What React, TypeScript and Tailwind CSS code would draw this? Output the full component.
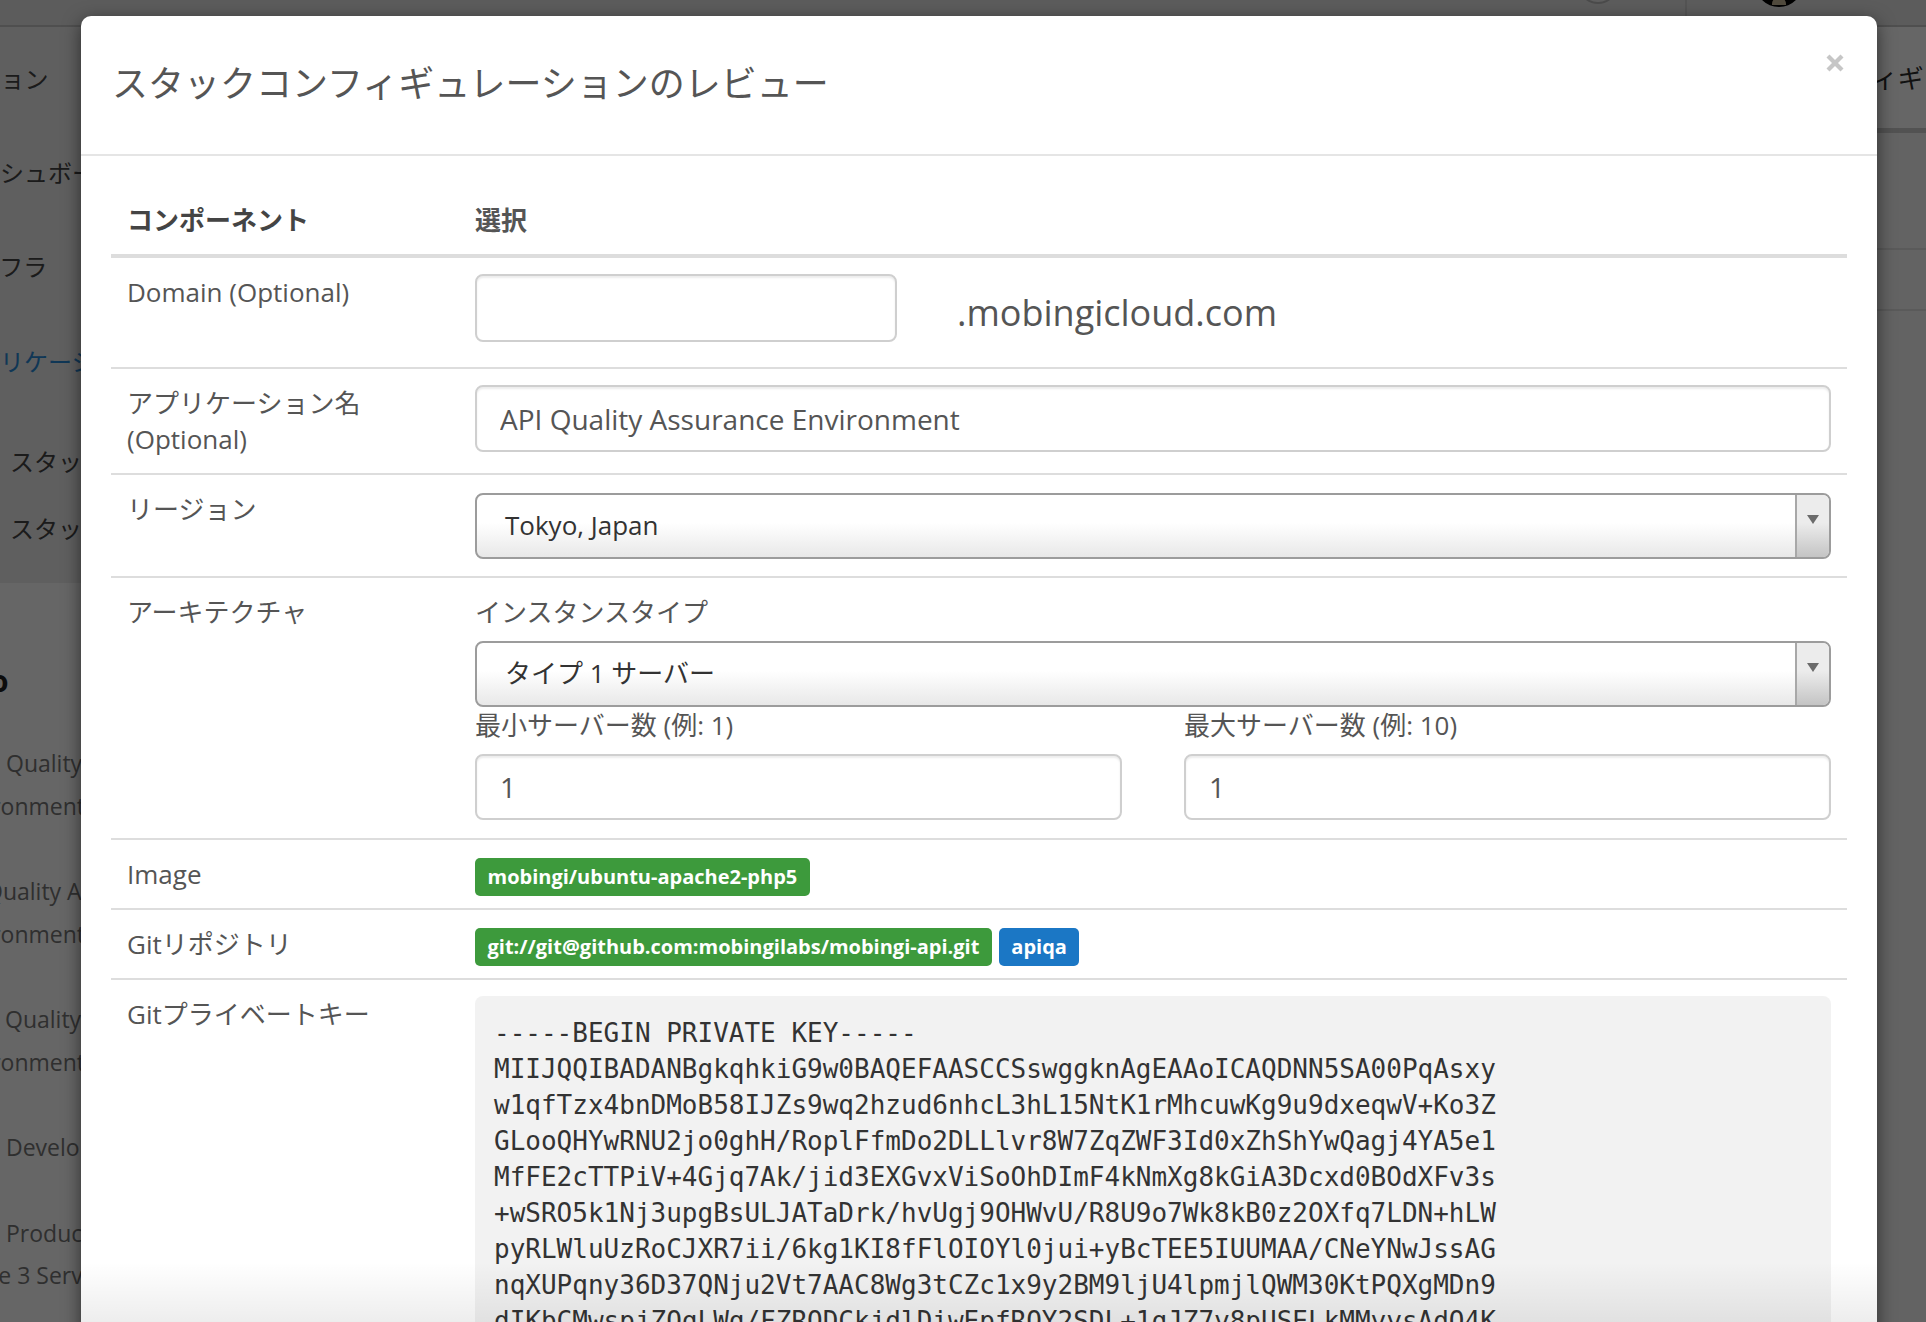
import React from "react";

const KEY_LINES = [
  "-----BEGIN PRIVATE KEY-----",
  "MIIJQQIBADANBgkqhkiG9w0BAQEFAASCCSswggknAgEAAoICAQDNN5SA00PqAsxy",
  "w1qfTzx4bnDMoB58IJZs9wq2hzud6nhcL3hL15NtK1rMhcuwKg9u9dxeqwV+Ko3Z",
  "GLooQHYwRNU2jo0ghH/RoplFfmDo2DLLlvr8W7ZqZWF3Id0xZhShYwQagj4YA5e1",
  "MfFE2cTTPiV+4Gjq7Ak/jid3EXGvxViSoOhDImF4kNmXg8kGiA3Dcxd0BOdXFv3s",
  "+wSRO5k1Nj3upgBsULJATaDrk/hvUgj9OHWvU/R8U9o7Wk8kB0z2OXfq7LDN+hLW",
  "pyRLWluUzRoCJXR7ii/6kg1KI8fFlOIOYl0jui+yBcTEE5IUUMAA/CNeYNwJssAG",
  "nqXUPqny36D37QNju2Vt7AAC8Wg3tCZc1x9y2BM9ljU4lpmjlQWM30KtPQXgMDn9",
  "dIKbCMwspjZOqLWq/FZRODCkjdlDiwEpfROY2SDL+1qJZ7y8pUSELkMMyysAdO4K",
  "Vq1bX8sT3eWm0pQ7cN2rY5uJ4kZ9hL6gF1dA3oE8iC0vB7nM2xS5wT9yR4qU6eP1",
  "-----END PRIVATE KEY-----",
];

// list in the page behind the overlay, only its left edge shows
const STACK_LINES: Array<{ text: string; ml: string }> = [
  { text: "Quality Assurance", ml: "ml-[6px]" },
  { text: "Environment", ml: "ml-[-53px]" },
  { text: "", ml: "" },
  { text: "Quality Assurance", ml: "ml-[-15px]" },
  { text: "Environment", ml: "ml-[-53px]" },
  { text: "", ml: "" },
  { text: "Quality Assurance", ml: "ml-[5px]" },
  { text: "Environment", ml: "ml-[-53px]" },
  { text: "", ml: "" },
  { text: "Development", ml: "ml-[6px]" },
  { text: "", ml: "" },
  { text: "Production", ml: "ml-[6px]" },
  { text: "Type 3 Server", ml: "ml-[-40px]" },
];

const NAV_ITEMS: Array<{ text: string; cls: string }> = [
  { text: "ナビゲーション", cls: "ml-[-119px] mt-[34px]" },
  { text: "ダッシュボード", cls: "ml-[-48px] mt-[58px]" },
  { text: "インフラ", cls: "ml-[-48px] mt-[58px]" },
  { text: "アプリケーション", cls: "ml-[-48px] mt-[59px] text-[#2a8ad6]" },
  { text: "スタック設定", cls: "ml-[10px] mt-[64px]" },
  { text: "スタック一覧", cls: "ml-[10px] mt-[31px]" },
];

const labelCls = "text-[26px] leading-[36px] text-[#555]";
const inputCls =
  "block w-full rounded-[8px] border-2 border-[#cfcfcf] bg-white pl-[23px] text-[28px] text-[#555] shadow-[inset_0_2px_2px_rgba(0,0,0,0.08)] outline-none font-['Open_Sans','Noto_Sans_CJK_JP',sans-serif]";
const badgeCls =
  "inline-flex h-[38px] items-center rounded-[5px] px-[12.5px] text-[20px] font-bold leading-none text-white";

function FakeSelect({ value }: { value: string }) {
  return (
    <div className="flex h-[66px] overflow-hidden rounded-[8px] border-2 border-[#9c9c9c] bg-[linear-gradient(#ffffff_45%,#e8e8e8)]">
      <div className="flex-1 pl-[28px] text-[26px] leading-[60px] text-[#333]">{value}</div>
      <div className="flex w-[34px] justify-center border-l-2 border-[#a8a8a8] bg-[linear-gradient(#ececec_45%,#c4c4c4)] pt-[20px]">
        <svg width="12" height="9" viewBox="0 0 12 9">
          <polygon points="0,0 12,0 6,9" fill="#6b6b6b" />
        </svg>
      </div>
    </div>
  );
}

function Row({ label, children, first }: { label: React.ReactNode; children: React.ReactNode; first?: boolean }) {
  return (
    <div className={`grid grid-cols-[348px_1fr] ${first ? "" : "border-t-2 border-[#dddddd]"}`}>
      <div className={`px-[16px] pt-[16px] pb-[16px] ${labelCls}`}>{label}</div>
      <div className="px-[16px] pt-[16px] pb-[16px]">{children}</div>
    </div>
  );
}

function PageBehind() {
  return (
    <div className="flex h-full flex-col">
      {/* top nav */}
      <div className="flex h-[27px] shrink-0 items-start border-b-2 border-[#c6c6c6] bg-[#e6e6e6]">
        <div className="ml-[1578px] mt-[-36px] h-[40px] w-[40px] shrink-0 rounded-full border-2 border-[#bcbcbc] bg-[#eeeeee]" />
        <div className="ml-[67px] h-full w-[2px] shrink-0 bg-[#d2d2d2]" />
        <div className="ml-[68px] mt-[-41px] flex h-[48px] w-[48px] shrink-0 items-end justify-center rounded-full bg-black">
          <div className="mb-[2px] h-[8px] w-[14px] rounded-t-full bg-[#cbbb9c]" />
        </div>
      </div>

      <div className="flex flex-1">
        {/* sidebar */}
        <div className="flex w-[260px] shrink-0 flex-col">
          <div className="flex h-[556px] flex-col bg-[#ededed] text-[24px] leading-[36px] text-[#444] whitespace-nowrap">
            {NAV_ITEMS.map((item) => (
              <div key={item.text} className="w-[81px] overflow-hidden">
                <div className={item.cls}>{item.text}</div>
              </div>
            ))}
          </div>
          <div className="flex flex-1 flex-col bg-white whitespace-nowrap">
            <div className="mt-[78px] w-[81px] overflow-hidden">
              <div className="ml-[-10px] text-[30px] font-bold leading-[40px] text-[#1f1f1f]">o</div>
            </div>
            <div className="mt-[41px] flex flex-col text-[23px] text-[#777]">
              {STACK_LINES.map((l, i) => (
                <div key={i} className="h-[42.7px] w-[81px] overflow-hidden">
                  <div className={`leading-[42.7px] ${l.ml}`}>{l.text}</div>
                </div>
              ))}
            </div>
          </div>
        </div>

        {/* main */}
        <div className="flex flex-1 flex-col bg-white">
          <div className="h-[101px] whitespace-nowrap pt-[33px] text-[26px] leading-[36px] text-[#2b2b2b]">
            <div className="ml-[1617px] w-[49px] overflow-hidden">
              <div className="ml-[-82px]">コンフィギュレーション</div>
            </div>
          </div>
          <div className="h-[5px] bg-[#cdcdcd]" />
          <div className="h-[117px] border-b-2 border-[#e1e1e1] bg-[#f7f7f7]" />
          <div className="h-[61px] border-b-2 border-[#e1e1e1] bg-[#f7f7f7]" />
          <div className="flex-1 bg-[#f7f7f7]" />
        </div>
      </div>
    </div>
  );
}

export default function App() {
  return (
    <div className="relative h-[1322px] w-full overflow-hidden bg-white font-['Open_Sans','Noto_Sans_CJK_JP',sans-serif]">
      <PageBehind />

      <div className="absolute inset-0 bg-black/60" />

      {/* modal */}
      <div className="absolute left-[81px] top-[16px] w-[1796px] rounded-[10px] bg-white shadow-[0_5px_18px_rgba(0,0,0,0.55)]">
        <div className="flex h-[140px] items-start justify-between border-b-2 border-[#e5e5e5] pl-[31px] pr-[33px]">
          <h3 className="pt-[42px] text-[36px] font-normal leading-[52px] text-[#555]">
            スタックコンフィギュレーションのレビュー
          </h3>
          <button type="button" className="mt-[38px]" aria-label="close">
            <svg width="18" height="18" viewBox="0 0 18 18">
              <line x1="2" y1="2" x2="16" y2="16" stroke="#c6c6c6" strokeWidth="4.2" />
              <line x1="16" y1="2" x2="2" y2="16" stroke="#c6c6c6" strokeWidth="4.2" />
            </svg>
          </button>
        </div>

        <div className="p-[30px]">
          {/* table head */}
          <div className="grid grid-cols-[348px_1fr] border-b-4 border-[#dddddd] text-[26px] font-bold leading-[36px]">
            <div className="p-[16px] text-[#444]">コンポーネント</div>
            <div className="p-[16px] text-[#555]">選択</div>
          </div>

          <Row first label="Domain (Optional)">
            <div className="flex h-[77px] items-start">
              <input readOnly defaultValue="" className={`${inputCls} h-[68px] !w-[422px]`} />
              <span className="ml-[60px] mt-[13px] text-[36px] leading-[51px] text-[#555]">.mobingicloud.com</span>
            </div>
          </Row>

          <Row
            label={
              <>
                アプリケーション名
                <br />
                (Optional)
              </>
            }
          >
            <input readOnly defaultValue="API Quality Assurance Environment" className={`${inputCls} h-[67px]`} />
          </Row>

          <Row label="リージョン">
            <div className="mt-[2px] pb-[1px]">
              <FakeSelect value="Tokyo, Japan" />
            </div>
          </Row>

          <Row label="アーキテクチャ">
            <div className="pb-[2px]">
              <div className={labelCls}>インスタンスタイプ</div>
              <div className="mt-[11px]">
                <FakeSelect value="タイプ 1 サーバー" />
              </div>
              <div className="grid grid-cols-2 gap-x-[62px]">
                <div>
                  <div className={labelCls}>最小サーバー数 (例: 1)</div>
                  <input readOnly defaultValue="1" className={`${inputCls} mt-[11px] h-[66px]`} />
                </div>
                <div>
                  <div className={labelCls}>最大サーバー数 (例: 10)</div>
                  <input readOnly defaultValue="1" className={`${inputCls} mt-[11px] h-[66px]`} />
                </div>
              </div>
            </div>
          </Row>

          <Row label="Image">
            <div className="flex h-[36px] items-start">
              <span className={`${badgeCls} mt-[2px] bg-[#3d9a3c]`}>mobingi/ubuntu-apache2-php5</span>
            </div>
          </Row>

          <Row label="Gitリポジトリ">
            <div className="flex h-[36px] items-start gap-[7px]">
              <span className={`${badgeCls} mt-[2px] bg-[#3d9a3c]`}>git://git@github.com:mobingilabs/mobingi-api.git</span>
              <span className={`${badgeCls} mt-[2px] bg-[#1b77c5]`}>apiqa</span>
            </div>
          </Row>

          <Row label="Gitプライベートキー">
            <pre className="whitespace-pre rounded-[8px] bg-[#f2f2f2] p-[19px] font-['DejaVu_Sans_Mono',monospace] text-[26px] leading-[36px] text-[#333]">
              {KEY_LINES.join("\n")}
            </pre>
          </Row>
        </div>
      </div>

      {/* faint fade at the bottom edge */}
      <div className="pointer-events-none absolute bottom-0 left-[81px] h-[60px] w-[1796px] bg-gradient-to-b from-transparent to-black/[0.07]" />
    </div>
  );
}
